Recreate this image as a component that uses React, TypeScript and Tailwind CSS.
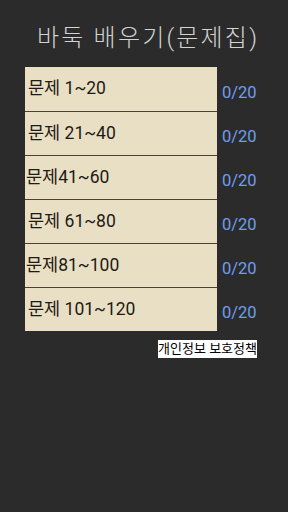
import React from 'react';

const rows = [
  { label: '문제 1~20', tight: false },
  { label: '문제 21~40', tight: false },
  { label: '문제41~60', tight: true },
  { label: '문제 61~80', tight: false },
  { label: '문제81~100', tight: true },
  { label: '문제 101~120', tight: false },
];

export default function App() {
  return (
    <div
      className="w-full min-h-[512px] bg-[#2b2b2b]"
      style={{ fontFamily: 'Roboto, "Noto Sans CJK KR", sans-serif' }}
    >
      {/* Title */}
      <div className="h-[67px] pt-[23px] pl-[37px]">
        <h1 className="text-[24px] leading-[30px] font-light text-[#d2d2d2] tracking-[2.2px] whitespace-nowrap">
          바둑 배우기(문제집)
        </h1>
      </div>

      {/* Problem sets */}
      <div className="flex flex-col pl-[25px]">
        {rows.map((row, i) => (
          <div key={i} className="flex h-[44px]">
            <div
              className={`w-[192px] h-full bg-[#e9dfc4] ${i > 0 ? 'border-t-[1.5px] border-[#4a4139]' : ''} ${row.tight ? 'pl-[1px]' : 'pl-[3px]'} pt-[9px]`}
            >
              <span className="text-[17.5px] leading-[24px] text-[#1e1a14] whitespace-nowrap">{row.label}</span>
            </div>
            <div className="pl-[5px] pt-[16px] text-[16.5px] leading-[20px] text-[#6e9ef0]">0/20</div>
          </div>
        ))}
      </div>

      {/* Privacy link */}
      <div className="flex justify-end pr-[31px] pt-[9px]">
        <span className="bg-white text-black text-[13px] leading-[18px] whitespace-nowrap">
          개인정보 보호정책
        </span>
      </div>
    </div>
  );
}
